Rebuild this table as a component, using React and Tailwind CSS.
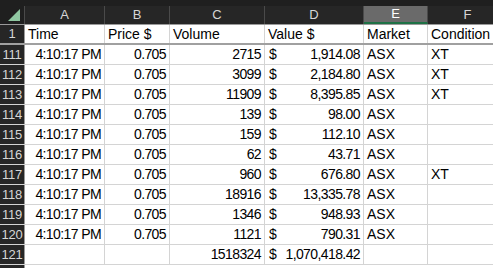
import React from "react";

const cols = [
  { key: "A", w: 80 },
  { key: "B", w: 65 },
  { key: "C", w: 95 },
  { key: "D", w: 99 },
  { key: "E", w: 64 },
  { key: "F", w: 80 },
];

const rows = [
  [111, "2715", "1,914.08", "XT"],
  [112, "3099", "2,184.80", "XT"],
  [113, "11909", "8,395.85", "XT"],
  [114, "139", "98.00", ""],
  [115, "159", "112.10", ""],
  [116, "62", "43.71", ""],
  [117, "960", "676.80", "XT"],
  [118, "18916", "13,335.78", ""],
  [119, "1346", "948.93", ""],
  [120, "1121", "790.31", ""],
];

const font = { fontFamily: '"Liberation Sans", Arial, sans-serif' };

function Cell({ w, children, className = "" }) {
  return (
    <div
      className={`h-full shrink-0 border-r border-[#d4d4d4] px-[3px] flex items-center overflow-hidden whitespace-nowrap ${className}`}
      style={{ width: w }}
    >
      {children}
    </div>
  );
}

function RowHead({ n }) {
  return (
    <div className="w-[25px] h-full shrink-0 bg-[#262626] border-r border-[#9a9a9a] text-[#d6d6d6] flex items-center justify-center text-[13px] tracking-[-0.3px]">
      {n}
    </div>
  );
}

const num = "justify-end tracking-[-0.6px]";

export default function App() {
  return (
    <div className="w-[493px] h-[268px] overflow-hidden bg-white text-[14px] text-black" style={font}>
      {/* column header */}
      <div className="flex h-[25px] bg-[#1f1f1f] pt-[6px] border-b border-[#9a9a9a]">
        <div className="w-[25px] shrink-0 h-full relative border-r border-[#4a4a4a]">
          <div
            className="absolute right-[4px] bottom-[3px] w-[12px] h-[12px] bg-[#8fc7a1]"
            style={{ clipPath: "polygon(100% 0, 100% 100%, 0 100%)" }}
          />
        </div>
        {cols.map((c) => (
          <div
            key={c.key}
            className={`shrink-0 h-full flex items-center justify-center text-[13px] border-r border-[#4a4a4a] ${
              c.key === "E" ? "bg-[#6a6a6a] text-white border-b-2 border-b-[#1e7145]" : "bg-[#262626] text-[#d6d6d6]"
            }`}
            style={{ width: c.w }}
          >
            {c.key}
          </div>
        ))}
      </div>

      {/* row 1 */}
      <div className="flex h-[20px] border-b-2 border-[#a0a0a0]">
        <RowHead n={1} />
        <Cell w={80}>Time</Cell>
        <Cell w={65}>Price $</Cell>
        <Cell w={95}>Volume</Cell>
        <Cell w={99}>Value $</Cell>
        <Cell w={64}>Market</Cell>
        <Cell w={80}>Condition</Cell>
      </div>

      {rows.map(([n, vol, val, cond]) => (
        <div key={n} className="flex h-[20px] border-b border-[#d4d4d4]">
          <RowHead n={n} />
          <Cell w={80} className={num}>4:10:17 PM</Cell>
          <Cell w={65} className={num}>0.705</Cell>
          <Cell w={95} className={num}>{vol}</Cell>
          <Cell w={99} className="justify-between pl-[4px] tracking-[-0.6px]">
            <span>$</span>
            <span>{val}</span>
          </Cell>
          <Cell w={64}>ASX</Cell>
          <Cell w={80}>{cond}</Cell>
        </div>
      ))}

      <div className="flex h-[20px] border-b border-[#d4d4d4]">
        <RowHead n={121} />
        <Cell w={80} />
        <Cell w={65} />
        <Cell w={95} className={num}>1518324</Cell>
        <Cell w={99} className="justify-between pl-[4px] tracking-[-0.6px]">
          <span>$</span>
          <span>1,070,418.42</span>
        </Cell>
        <Cell w={64} />
        <Cell w={80} />
      </div>
      <div className="flex h-[20px]">
        <div className="w-[25px] h-full shrink-0 bg-[#262626] border-r border-[#9a9a9a]" />
      </div>
    </div>
  );
}
